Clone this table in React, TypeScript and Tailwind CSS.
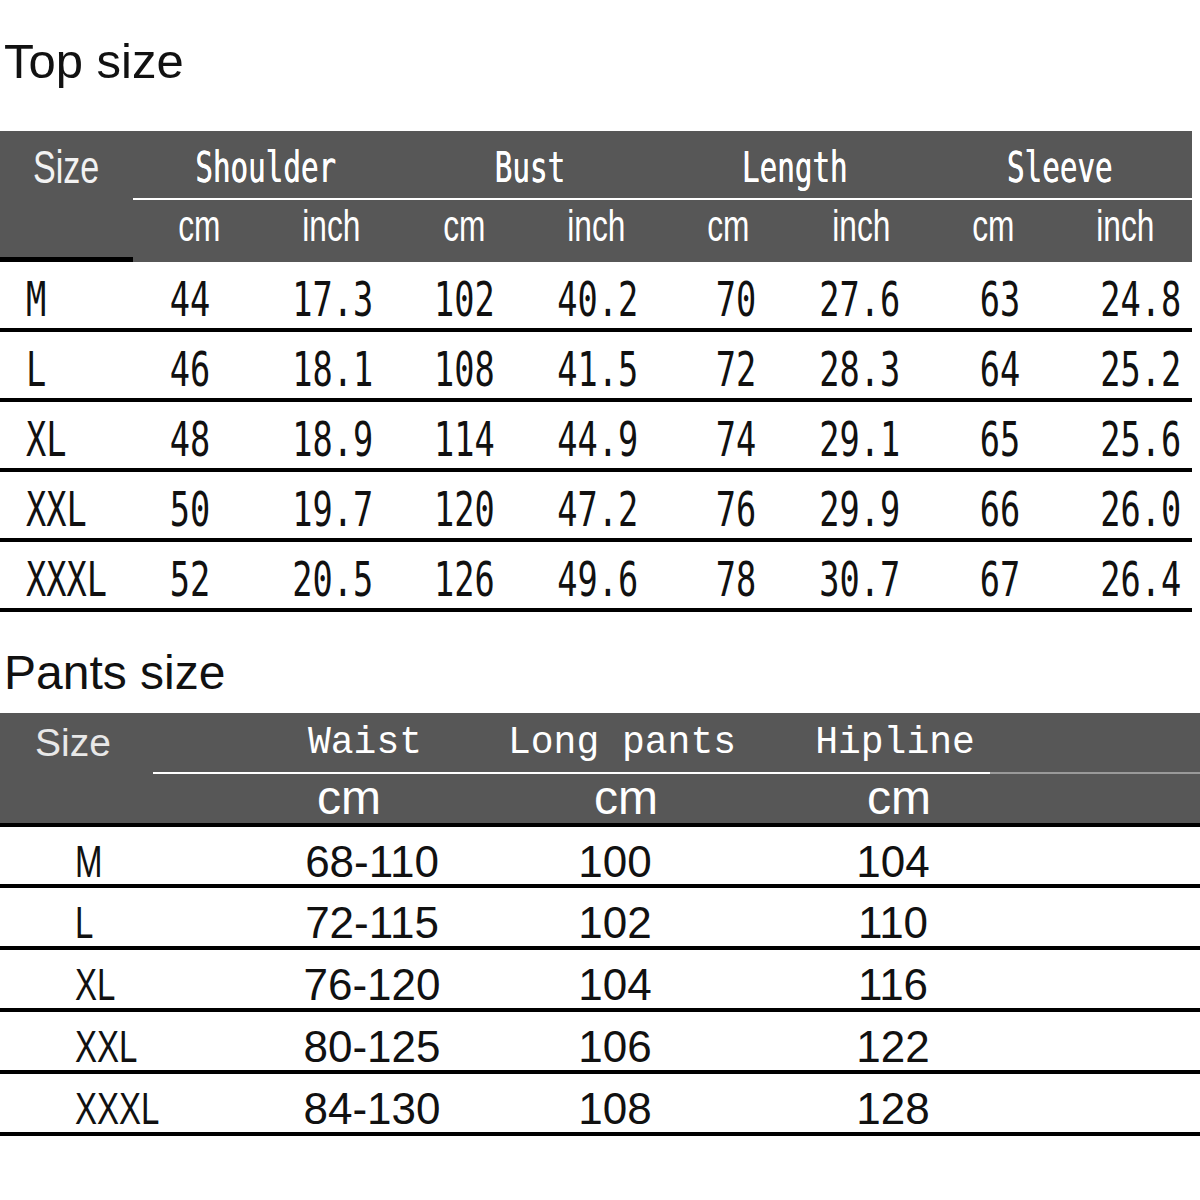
const topGroups = ['Shoulder', 'Bust', 'Length', 'Sleeve'];

const topRows = [
  ['M', '44', '17.3', '102', '40.2', '70', '27.6', '63', '24.8'],
  ['L', '46', '18.1', '108', '41.5', '72', '28.3', '64', '25.2'],
  ['XL', '48', '18.9', '114', '44.9', '74', '29.1', '65', '25.6'],
  ['XXL', '50', '19.7', '120', '47.2', '76', '29.9', '66', '26.0'],
  ['XXXL', '52', '20.5', '126', '49.6', '78', '30.7', '67', '26.4'],
];

// small nudges so each value column sits where the original chart has it
const topCellPad = [
  'pl-[26px]',
  'pr-[18px]',
  'pl-[2px]',
  '',
  'pl-[2px]',
  'pl-[14px]',
  'pr-[2px]',
  'pl-[12px]',
  'pl-[30px]',
];

const pantsRows = [
  ['M', '68-110', '100', '104'],
  ['L', '72-115', '102', '110'],
  ['XL', '76-120', '104', '116'],
  ['XXL', '80-125', '106', '122'],
  ['XXXL', '84-130', '108', '128'],
];

function TopSizeTable() {
  return (
    <div className="w-[1192px]">
      <div className="flex bg-[#575757]">
        <div className="w-[133px] h-[131px] flex flex-col border-b-[5px] border-black pt-[13px] pl-[33px]">
          <span className="inline-block origin-left scale-x-[0.74] font-['Liberation_Sans',Arial,sans-serif] text-[46px] leading-none text-[#f2f2f2]">
            Size
          </span>
        </div>
        <div className="flex-1 flex flex-col">
          <div className="h-[69px] grid grid-cols-4 border-b-2 border-white">
            {topGroups.map((g) => (
              <div key={g} className="flex items-center justify-center pt-[6px]">
                <span className="inline-block scale-x-[0.68] font-['DejaVu_Sans_Mono',monospace] text-[43px] leading-none text-white [text-shadow:0.6px_0_0_#fff]">
                  {g}
                </span>
              </div>
            ))}
          </div>
          <div className="h-[60px] grid grid-cols-8">
            {topGroups.flatMap((g) => ['cm', 'inch'].map((u) => (
              <div key={g + u} className="flex items-center justify-center pb-2">
                <span className="inline-block scale-x-[0.72] font-['Liberation_Sans',Arial,sans-serif] text-[44px] leading-none text-white">
                  {u}
                </span>
              </div>
            )))}
          </div>
        </div>
      </div>

      {topRows.map((row) => (
        <div key={row[0]} className="h-[70px] grid grid-cols-[133px_repeat(8,minmax(0,1fr))] border-b-4 border-black">
          {row.map((v, i) => (
            <div
              key={i}
              className={`min-w-0 flex items-center pt-2 ${i === 0 ? '' : 'justify-center'} ${topCellPad[i]}`}
            >
              <span
                className={`inline-block shrink-0 ${i === 0 ? 'origin-left' : ''} scale-x-[0.7] font-['DejaVu_Sans_Mono',monospace] text-[48px] leading-none text-[#111]`}
              >
                {v}
              </span>
            </div>
          ))}
        </div>
      ))}
    </div>
  );
}

function PantsSizeTable() {
  return (
    <div className="w-full">
      <div className="bg-[#575757] border-b-4 border-black">
        <div className="grid grid-cols-[237px_256px_258px_288px_1fr] h-[59px]">
          <div className="flex items-center pl-[35px]">
            <span className="font-['Liberation_Sans',Arial,sans-serif] text-[39px] leading-none text-[#e8e8e8]">Size</span>
          </div>
          {['Waist', 'Long pants', 'Hipline'].map((h) => (
            <div key={h} className="flex items-center justify-center">
              <span className="font-['Liberation_Mono',monospace] text-[38px] leading-none text-white whitespace-pre">{h}</span>
            </div>
          ))}
          <div />
        </div>
        <div className="flex h-[2px]">
          <div className="w-[153px]" />
          <div className="w-[837px] bg-white" />
          <div className="flex-1 bg-[#9a9a9a]" />
        </div>
        <div className="grid grid-cols-[220px_258px_296px_250px_1fr] h-[49px]">
          <div />
          {['w', 'l', 'h'].map((k) => (
            <div key={k} className="flex items-center justify-center pb-2">
              <span className="font-['Liberation_Sans',Arial,sans-serif] text-[48px] leading-none text-white">cm</span>
            </div>
          ))}
          <div />
        </div>
      </div>

      {pantsRows.map((row, r) => (
        <div
          key={row[0]}
          className={`grid grid-cols-[237px_270px_216px_340px_1fr] ${r === 0 ? 'h-[61px]' : 'h-[62px]'} border-b-4 border-black`}
        >
          <div className="flex items-center pt-3 pl-[75px]">
            <span className="inline-block origin-left scale-x-[0.75] font-['Liberation_Sans',Arial,sans-serif] text-[44px] leading-none text-[#111]">
              {row[0]}
            </span>
          </div>
          {row.slice(1).map((v, i) => (
            <div key={i} className="flex items-center justify-center pt-3">
              <span className="font-['Liberation_Sans',Arial,sans-serif] text-[44px] leading-none text-[#111]">{v}</span>
            </div>
          ))}
          <div />
        </div>
      ))}
    </div>
  );
}

export default function App() {
  return (
    <div className="w-[1200px] h-[1200px] bg-white overflow-hidden">
      <div className="h-[131px] pt-[37px] pl-1">
        <h1 className="font-['Liberation_Sans',Arial,sans-serif] text-[49px] leading-none text-[#111]">Top size</h1>
      </div>
      <TopSizeTable />
      <div className="h-[101px] pt-[37px] pl-1">
        <h2 className="font-['Liberation_Sans',Arial,sans-serif] text-[48px] leading-none text-[#111]">Pants size</h2>
      </div>
      <PantsSizeTable />
    </div>
  );
}
